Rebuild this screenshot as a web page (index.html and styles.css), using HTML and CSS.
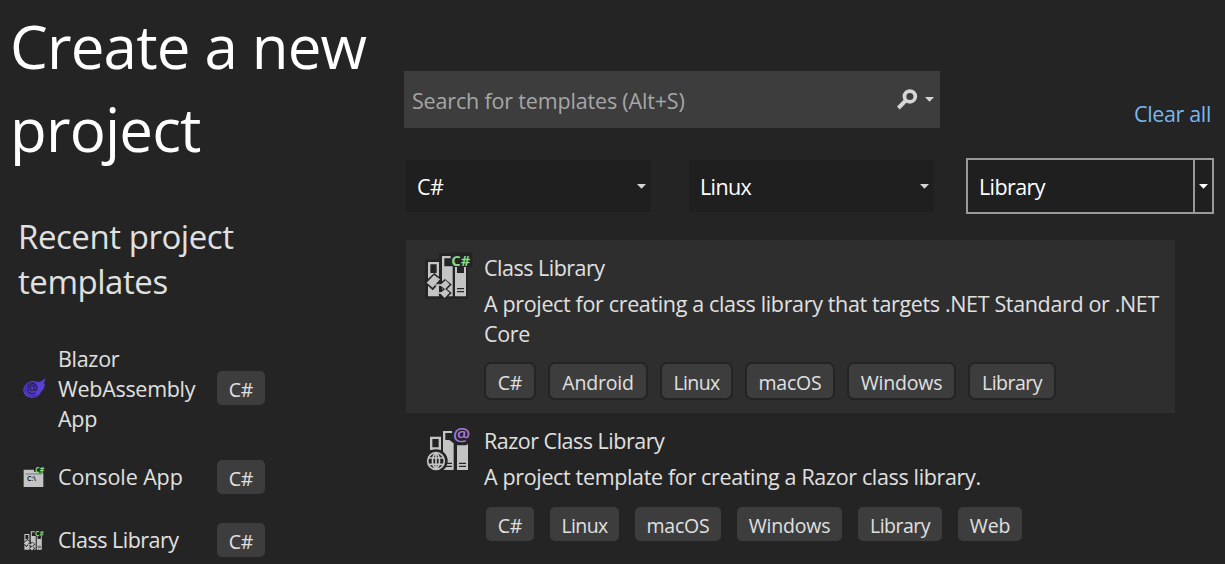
FILE: index.html
```
<!DOCTYPE html>
<html lang="en">
<head>
<meta charset="utf-8">
<title>Create a new project</title>
<link rel="stylesheet" href="styles.css">
</head>
<body>
<svg class="defs" aria-hidden="true">
  <defs>
    <symbol id="class-library" viewBox="15 18 144 144">
      <path class="ink-back" d="M15 43H57V24H98V22H157V66H144V161H15Z"/>
      <path class="ink-light" fill-rule="evenodd" d="M24 51H57V154H24ZM31 58V84H50V58Z"/>
      <path class="ink-light" d="M66 33H92V40H73V64H98V154H66Z"/>
      <path class="ink-light" d="M105 66H111V84H132V66H138V154H105Z"/>
      <path class="line-dark" d="M111 131H132M111 140H132"/>
      <path class="shape-outline" d="M21 112L43 91L59 104L38 128Z"/>
      <path class="shape-outline" d="M62 120L75 109L87 119L76 130ZM62 146L75 134L87 144L75 156Z"/>
      <path class="line-light" d="M46 120H66M53 120V144H68"/>
      <path class="ink-light" d="M20 113L42 90L60 103L38 128ZM60 121L77 106L89 118L75 133ZM60 145L76 132L89 143L74 159Z"/>
      <text class="badge-csharp" x="94" y="62" textLength="57" lengthAdjust="spacingAndGlyphs">C#</text>
    </symbol>
    <symbol id="razor-library" viewBox="15 18 144 144">
      <path class="ink-light" fill-rule="evenodd" d="M30 50H63V90H30ZM37 57V82H56V57Z"/>
      <path class="ink-light" d="M69 33H96V39H76V60H88L101 70V150H69Z"/>
      <path class="ink-light" d="M111 76H138L144 72V150H111Z"/>
      <path class="line-dark" d="M76 130H96M76 139H96M117 130H138M117 139H138"/>
      <circle class="ink-back" cx="48" cy="123" r="35"/>
      <circle class="line-light" cx="48" cy="123" r="25"/>
      <path class="line-light" d="M26 114H70M26 133H70M48 98V148M48 98C34 110 34 136 48 148M48 98C62 110 62 136 48 148"/>
      <text class="badge-razor" x="99" y="62" textLength="52" lengthAdjust="spacingAndGlyphs">@</text>
    </symbol>
    <symbol id="arrow" viewBox="0 0 9 5"><path d="M0 0H9L4.5 4.8Z"/></symbol>
  </defs>
</svg>

<div class="page">
  <aside class="side">
    <h1 class="title">Create a new<br>project</h1>
    <h2 class="subtitle">Recent project<br>templates</h2>
    <ul class="recent">
      <li class="recent-item">
        <svg class="recent-icon" viewBox="0 0 66 66">
          <path fill="#5a3fd6" d="M66 4C60 11 53 15 44 15C36 11 24 10 14 17C-2 27-3 46 9 56C21 66 43 64 51 50C55 43 63 36 65 28C67 23 64 21 62 19C65 14 67 10 66 4Z"/>
          <path fill="none" stroke="#35257c" stroke-width="3" d="M38 18C22 12 6 23 6 37C7 56 29 63 43 52"/>
          <text class="badge-blazor" x="10" y="49" textLength="36" lengthAdjust="spacingAndGlyphs">@</text>
        </svg>
        <span class="recent-name">Blazor<br>WebAssembly<br>App</span>
        <span class="tag tag-cs">C#</span>
      </li>
      <li class="recent-item item-console">
        <svg class="recent-icon" viewBox="0 0 66 66">
          <path fill="#c4c4c4" d="M2 11H33V17H40L46 22H61V63H2Z"/>
          <path d="M7 24H56" stroke="#555" stroke-width="2"/>
          <text class="console-prompt" x="12" y="45" textLength="27" lengthAdjust="spacingAndGlyphs">C:\</text>
          <text class="badge-csharp badge-small" x="37" y="20" textLength="27" lengthAdjust="spacingAndGlyphs">C#</text>
        </svg>
        <span class="recent-name">Console App</span>
        <span class="tag tag-cs">C#</span>
      </li>
      <li class="recent-item item-library">
        <svg class="recent-icon"><use href="#class-library"/></svg>
        <span class="recent-name">Class Library</span>
        <span class="tag tag-cs">C#</span>
      </li>
    </ul>
  </aside>

  <main class="main">
    <div class="top">
      <div class="search">
        <span class="search-text">Search for templates (Alt+S)</span>
        <svg class="search-icon" viewBox="36 40 62 62"><circle cx="74" cy="62" r="16" fill="none" stroke="#d6d6d6" stroke-width="11"/><path d="M63 73L40 96" stroke="#d6d6d6" stroke-width="12"/></svg>
        <svg class="arrow"><use href="#arrow"/></svg>
      </div>
      <a class="clear">Clear all</a>
    </div>
    <div class="filters">
      <div class="combo"><span class="combo-text">C#</span><svg class="arrow"><use href="#arrow"/></svg></div>
      <div class="combo"><span class="combo-text">Linux</span><svg class="arrow"><use href="#arrow"/></svg></div>
      <div class="combo combo-active"><span class="combo-text">Library</span><span class="combo-button"><svg class="arrow"><use href="#arrow"/></svg></span></div>
    </div>
    <section class="result result-selected">
      <svg class="result-icon"><use href="#class-library"/></svg>
      <div class="result-body">
        <div class="result-name">Class Library</div>
        <div class="result-text">A project for creating a class library that targets .NET Standard or .NET<br>Core</div>
        <div class="tags">
          <span class="tag tag-cs">C#</span><span class="tag tag-android">Android</span><span class="tag tag-linux">Linux</span><span class="tag tag-macos">macOS</span><span class="tag tag-windows">Windows</span><span class="tag tag-library">Library</span>
        </div>
      </div>
    </section>
    <section class="result">
      <svg class="result-icon"><use href="#razor-library"/></svg>
      <div class="result-body">
        <div class="result-name">Razor Class Library</div>
        <div class="result-text">A project template for creating a Razor class library.</div>
        <div class="tags">
          <span class="tag tag-cs">C#</span><span class="tag tag-linux">Linux</span><span class="tag tag-macos">macOS</span><span class="tag tag-windows">Windows</span><span class="tag tag-library">Library</span><span class="tag tag-web">Web</span>
        </div>
      </div>
    </section>
  </main>
</div>
</body>
</html>
```
FILE: styles.css
```
* { box-sizing: border-box; }
body {
  margin: 0;
  background: #242424;
  color: #e0e0e0;
  font: 400 21.5px/30px "Open Sans", "Noto Sans", sans-serif;
  letter-spacing: -0.35px;
  white-space: nowrap;
}
.defs { display: none; }
.page {
  display: grid;
  grid-template-columns: 404px 1fr;
  height: 564px;
  overflow: hidden;
}

/* Left column */
.side { padding-top: 5px; }
.title {
  margin: 0;
  padding-left: 10px;
  color: #fff;
  font-size: 60px;
  font-weight: 400;
  letter-spacing: -0.8px;
  line-height: 83px;
}
.subtitle {
  margin: 43px 0 0;
  padding-left: 18px;
  font-size: 33px;
  font-weight: 400;
  letter-spacing: -0.45px;
  line-height: 45px;
}
.recent {
  margin: 38px 0 0;
  padding: 0 0 0 23px;
  list-style: none;
}
.recent-item {
  display: flex;
  align-items: center;
  min-height: 34px;
}
.item-console { margin-top: 26px; }
.item-library { margin-top: 29px; }
.recent-icon { width: 22px; height: 22px; margin-right: 13px; overflow: visible; }
.recent-name { width: 159px; padding-top: 2px; letter-spacing: -0.3px; }
.item-console .recent-name { padding-top: 0; letter-spacing: -0.1px; }
.item-library .recent-name { padding-top: 0; letter-spacing: -0.5px; }

/* Chips */
.tag {
  height: 34px;
  padding-top: 3px;
  border-radius: 5px;
  background: #3d3d3d;
  font-size: 19.5px;
  letter-spacing: -0.2px;
  line-height: 31px;
  text-align: center;
}
.tag-cs { width: 48px; }
.tag-android { width: 96px; }
.tag-linux { width: 69px; letter-spacing: -0.6px; }
.tag-macos { width: 86px; }
.tag-windows { width: 105px; }
.tag-library { width: 84px; letter-spacing: -0.5px; }
.tag-web { width: 64px; }

/* Search row */
.main { padding-top: 71px; }
.top { display: flex; height: 57px; }
.search {
  display: flex;
  align-items: center;
  width: 536px;
  height: 57px;
  padding: 0 6px 0 8px;
  background: #3d3d3d;
}
.search-text { flex: 1; padding-top: 3px; color: #a6a6a6; letter-spacing: -0.17px; }
.search-icon { width: 21px; height: 21px; margin-right: 7px; }
.arrow { width: 9px; height: 5px; fill: #d6d6d6; }
.clear {
  margin: 28px 14px 0 auto;
  color: #76b9ed;
}

/* Filters */
.filters {
  display: grid;
  grid-template-columns: 245px 245px 248px;
  column-gap: 38px;
  padding: 30px 0 0 2px;
}
.combo {
  display: flex;
  align-items: center;
  justify-content: space-between;
  height: 52px;
  margin-top: 2px;
  padding-right: 5px;
  background: #1f1f1f;
  color: #fff;
}
.combo-active {
  width: 248px;
  height: 56px;
  margin: 0 0 0 -6px;
  padding: 0;
  border: 2px solid #999;
}
.combo-active .arrow { fill: #fff; }
.combo-text { padding: 2px 0 0 11px; letter-spacing: -0.6px; }
.combo-button {
  display: flex;
  align-items: center;
  justify-content: center;
  width: 19px;
  height: 52px;
  border-left: 2px solid #999;
}

/* Results */
.result {
  display: flex;
  width: 769px;
  height: 151px;
  margin-left: 2px;
  padding: 12px 0 0 19px;
}
.result-selected {
  height: 173px;
  margin-top: 26px;
  background: #2e2e2e;
}
.result-icon { width: 48px; height: 48px; margin: 1px 11px 0 0; overflow: visible; }
.result-selected .result-icon { margin-top: -1px; }
.result-name { padding-top: 1px; letter-spacing: -0.5px; }
.result-text { margin-top: 6px; }
.tags { display: flex; gap: 16px; margin: 15px 0 0 2px; }
.result-selected .tag { box-shadow: 0 0 0 2px #242424; }

/* Icon parts */
.ink-back { fill: #242424; }
.ink-light { fill: #c4c4c4; }
.line-dark { fill: none; stroke: #242424; stroke-width: 4; }
.line-light { fill: none; stroke: #c4c4c4; stroke-width: 5; }
.shape-outline { fill: #242424; stroke: #242424; stroke-width: 11; }
.badge-csharp { fill: #86d983; font: 700 45px "Open Sans", sans-serif; letter-spacing: 0; }
.badge-small { font-size: 24px; }
.badge-razor { fill: #a878df; font: 600 54px "Open Sans", sans-serif; letter-spacing: 0; }
.badge-blazor { fill: #2b2058; font: 700 40px "Open Sans", sans-serif; letter-spacing: 0; }
.console-prompt { fill: #242424; font: 700 20px "Open Sans", sans-serif; letter-spacing: 0; }
```
